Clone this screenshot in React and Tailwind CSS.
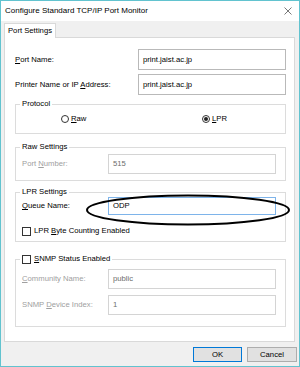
const U = ({ children }) => <span className="underline underline-offset-[1px]">{children}</span>;

const TextBox = ({ value, disabled, focused, className = "" }) => (
  <div
    className={`flex items-center px-[4px] bg-white border ${
      focused ? "border-[#7eb4ea]" : disabled ? "border-[#d4d4d4]" : "border-[#b9b9b9]"
    } ${disabled ? "text-[#6d6d6d]" : "text-black"} ${className}`}
  >
    {value}
  </div>
);

const CheckBox = () => <div className="w-[9px] h-[9px] border border-[#333] bg-white shrink-0" />;

const Radio = ({ checked }) => (
  <div className="w-[8px] h-[8px] rounded-full border border-[#333] bg-white flex items-center justify-center shrink-0">
    {checked && <div className="w-[4px] h-[4px] rounded-full bg-[#222]" />}
  </div>
);

const Group = ({ legend, className = "", children }) => (
  <fieldset className={`border border-[#dcdcdc] ml-[10px] w-[271px] ${className}`}>
    <legend className="ml-[4px] px-[2px] leading-[10px]">{legend}</legend>
    {children}
  </fieldset>
);

export default function App() {
  return (
    <div className="w-[300px] h-[367px] border border-[#62c3cf] bg-[#f0f0f0] flex flex-col font-['Liberation_Sans',Arial,sans-serif] text-[7.7px] text-black leading-[10px]">
      {/* title bar */}
      <div className="h-[20px] bg-white flex items-center justify-between pl-[4px] pr-[7px] shrink-0">
        <span className="text-[8px]">Configure Standard TCP/IP Port Monitor</span>
        <svg width="8" height="8" viewBox="0 0 8 8">
          <path d="M0.5 0.5 L7.5 7.5 M7.5 0.5 L0.5 7.5" stroke="#555" strokeWidth="0.8" />
        </svg>
      </div>

      {/* tab */}
      <div className="pl-[3px] pt-[2px] shrink-0">
        <div className="relative z-10 w-[52px] h-[15px] bg-white border border-b-0 border-[#d9d9d9] flex items-center justify-center">
          Port Settings
        </div>
      </div>

      {/* panel */}
      <div className="relative -mt-px ml-[3px] w-[291px] h-[305px] bg-white border border-[#d9d9d9] pt-[11px] shrink-0">
        <div className="flex items-center pl-[10px] h-[21px]">
          <span className="w-[123px]">
            <U>P</U>ort Name:
          </span>
          <TextBox value="print.jaist.ac.jp" className="w-[148px] h-[21px]" />
        </div>
        <div className="flex items-center pl-[10px] h-[21px] mt-[4px]">
          <span className="w-[123px]">
            Printer Name or IP <U>A</U>ddress:
          </span>
          <TextBox value="print.jaist.ac.jp" className="w-[148px] h-[21px]" />
        </div>

        <Group legend="Protocol" className="mt-[4px] pt-[4px] pb-[8px]">
          <div className="flex items-center h-[12px] pl-[45px]">
            <Radio />
            <span className="ml-[2px] w-[131px]">
              <U>R</U>aw
            </span>
            <Radio checked />
            <span className="ml-[2px]">
              <U>L</U>PR
            </span>
          </div>
        </Group>

        <Group legend="Raw Settings" className="mt-[8px] pt-[2px] pb-[6px]">
          <div className="flex items-center pl-[6px]">
            <span className="w-[86px] text-[#a0a0a0]">
              Port <U>N</U>umber:
            </span>
            <TextBox value="515" disabled className="w-[168px] h-[20px]" />
          </div>
        </Group>

        <Group legend="LPR Settings" className="mt-[6px] pt-0 pb-[5px]">
          <div className="flex items-center pl-[6px]">
            <span className="w-[86px]">
              <U>Q</U>ueue Name:
            </span>
            <TextBox value="ODP" focused className="w-[168px] h-[18px]" />
          </div>
          <div className="flex items-center pl-[6px] mt-[11px] h-[10px]">
            <CheckBox />
            <span className="ml-[3px]">
              LPR <U>B</U>yte Counting Enabled
            </span>
          </div>
        </Group>

        <Group
          legend={
            <span className="flex items-center">
              <CheckBox />
              <span className="ml-[3px]">
                <U>S</U>NMP Status Enabled
              </span>
            </span>
          }
          className="mt-[12px] pt-[5px] pb-[11px]"
        >
          <div className="flex items-center pl-[6px]">
            <span className="w-[86px] text-[#a0a0a0]">
              <U>C</U>ommunity Name:
            </span>
            <TextBox value="public" disabled className="w-[168px] h-[20px]" />
          </div>
          <div className="flex items-center pl-[6px] mt-[6px]">
            <span className="w-[86px] text-[#a0a0a0]">
              SNMP <U>D</U>evice Index:
            </span>
            <TextBox value="1" disabled className="w-[168px] h-[20px]" />
          </div>
        </Group>

        <svg className="absolute left-0 top-0 pointer-events-none overflow-visible" width="289" height="303">
          <ellipse cx="183" cy="172" rx="101" ry="14.5" fill="none" stroke="#000" strokeWidth="2" />
        </svg>
      </div>

      {/* buttons */}
      <div className="flex justify-end gap-[5px] pr-[2px] mt-[5px]">
        <button className="w-[49px] h-[15px] bg-[#e1e1e1] border border-[#0078d7] text-[7.7px] leading-none">OK</button>
        <button className="w-[50px] h-[15px] bg-[#e1e1e1] border border-[#adadad] text-[7.7px] leading-none">Cancel</button>
      </div>
    </div>
  );
}
